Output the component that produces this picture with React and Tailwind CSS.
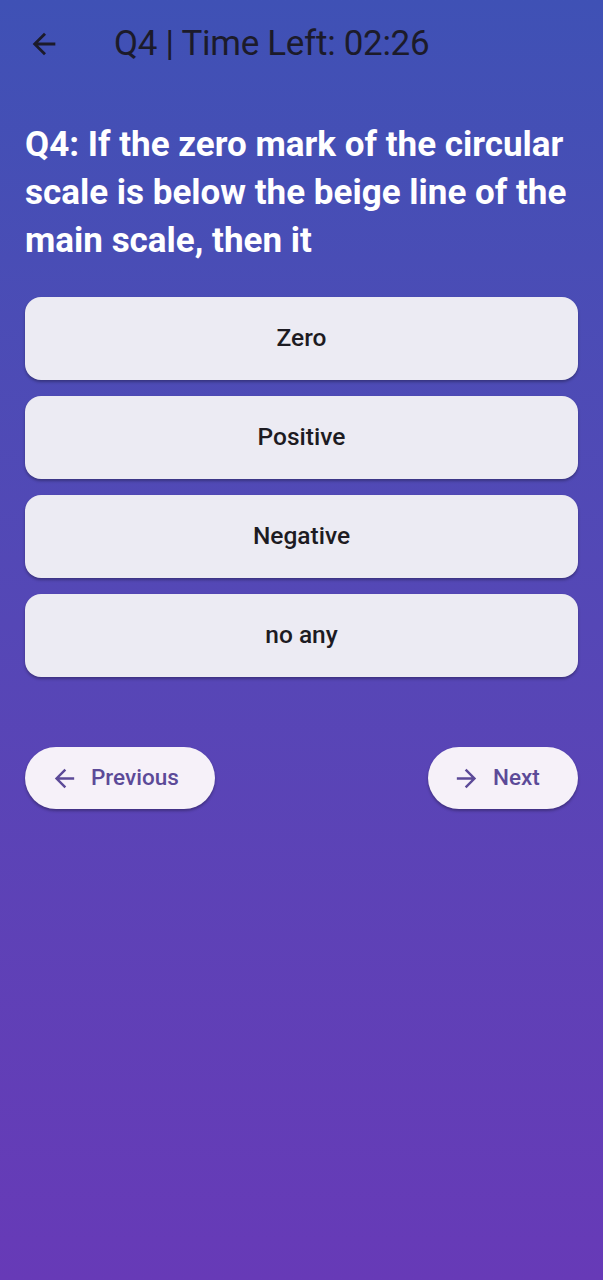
const ArrowBack = ({ className }) => (
  <svg viewBox="0 0 24 24" className={className} fill="currentColor">
    <path d="M20 11H7.83l5.59-5.59L12 4l-8 8 8 8 1.41-1.41L7.83 13H20v-2z" />
  </svg>
);

const ArrowForward = ({ className }) => (
  <svg viewBox="0 0 24 24" className={className} fill="currentColor">
    <path d="M12 4l-1.41 1.41L16.17 11H4v2h12.17l-5.58 5.59L12 20l8-8z" />
  </svg>
);

const options = ["Zero", "Positive", "Negative", "no any"];

export default function App() {
  return (
    <div
      className="min-h-[1280px] w-full bg-gradient-to-b from-[#3f51b5] to-[#673ab7] font-['Roboto',sans-serif]"
    >
      <header className="flex h-[88px] items-center">
        <button className="ml-[27px] text-[#1c1b2a]">
          <ArrowBack className="h-[34px] w-[34px]" />
        </button>
        <h1 className="ml-[53px] text-[35px] font-normal text-[#1c1b2a] tracking-[-0.3px]">
          Q4 | Time Left: 02:26
        </h1>
      </header>

      <div className="px-[25px] pt-[33px]">
        <p className="text-[35px] font-bold leading-[48px] text-white">
          Q4: If the zero mark of the circular scale is below the beige line of the main scale, then it
        </p>

        <div className="mt-[32px] flex flex-col gap-4">
          {options.map((opt) => (
            <button
              key={opt}
              className="h-[83px] w-full rounded-2xl bg-[#ecebf3] text-[24.5px] font-medium text-[#1d1b22] shadow-[0_2px_3px_rgba(0,0,0,0.3)]"
            >
              {opt}
            </button>
          ))}
        </div>

        <div className="mt-[70px] flex items-center justify-between">
          <button className="flex h-[62px] w-[190px] items-center gap-[12px] rounded-full bg-[#f6f1f9] pl-[25px] text-[22.5px] font-medium text-[#5c4a98] shadow-[0_2px_3px_rgba(0,0,0,0.3)]">
            <ArrowBack className="h-[29px] w-[29px]" />
            Previous
          </button>
          <button className="flex h-[62px] w-[150px] items-center gap-[12px] rounded-full bg-[#f6f1f9] pl-[24px] text-[22.5px] font-medium text-[#5c4a98] shadow-[0_2px_3px_rgba(0,0,0,0.3)]">
            <ArrowForward className="h-[29px] w-[29px]" />
            Next
          </button>
        </div>
      </div>
    </div>
  );
}
